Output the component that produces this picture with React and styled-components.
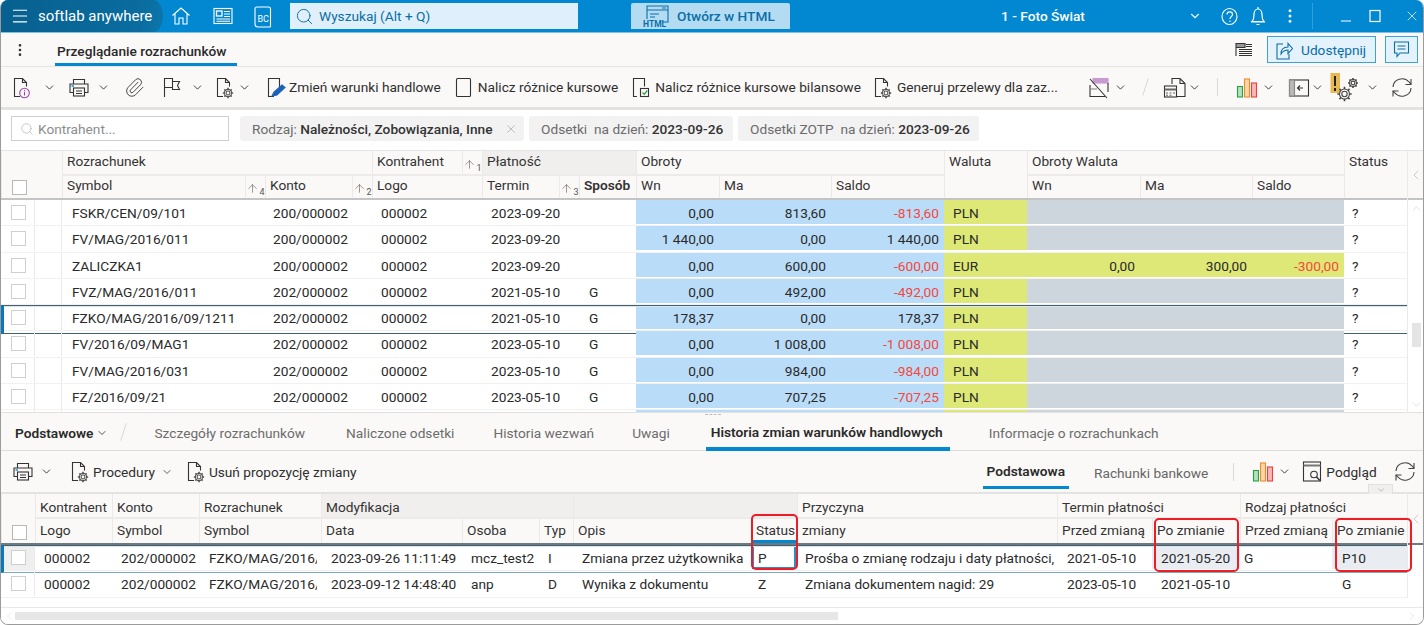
import React from 'react';
import styled, { createGlobalStyle } from 'styled-components';
import { ChevronDown, ChevronLeft, ChevronRight, ChevronUp, Search, Paperclip, X, Menu, EllipsisVertical, ArrowUp } from 'lucide-react';

const GlobalStyle = createGlobalStyle`
    html, body {
        margin: 0;
        padding: 0;
        background: #fff;
        font-family: Roboto, "Liberation Sans", sans-serif;
        font-size: 13.7px;
        color: #2a2a2a;
    }
    * { box-sizing: border-box; }
`;

const BLUE = '#0288d1';

const Window = styled.div`
    position: relative;
    width: 1424px;
    height: 625px;
    display: flex;
    flex-direction: column;
    overflow: hidden;
    background: #faf9f7;
    border: 1px solid #9b9b9b;
    border-top: 0;
    border-radius: 8px;
`;

/* title bar */
const TitleBar = styled.div`
    height: 33px;
    flex: none;
    display: flex;
    align-items: center;
    background: ${BLUE};
    color: #fff;
    border-bottom: 1px solid #7cc0e6;
`;
const Brand = styled.div`
    width: 162px;
    height: 100%;
    flex: none;
    display: flex;
    align-items: center;
    gap: 8px;
    padding-left: 9px;
    font-size: 15px;
    background: linear-gradient(100deg, #07608f 0%, #0a6c9f 85%, #0b77ad 100%);
    border-radius: 0 20px 20px 0 / 0 34px 34px 0;
`;
const TitleIcon = styled.span`
    display: flex;
    margin-left: ${p => p.$ml || 0}px;
    color: #e8f5fc;
`;
const SearchBox = styled.div`
    width: 288px;
    height: 26px;
    flex: none;
    margin-left: 17px;
    display: flex;
    align-items: center;
    gap: 5px;
    padding-left: 5px;
    background: #dff0fa;
    color: #0b6ea6;
`;
const HtmlButton = styled.div`
    width: 159px;
    height: 26px;
    flex: none;
    margin-left: 53px;
    display: flex;
    align-items: center;
    gap: 6px;
    padding-left: 12px;
    background: #b3dcf3;
    border-radius: 2px 2px 0 0;
    color: #0a6ea8;
    font-weight: 500;
`;
const CompanyName = styled.div`
    width: 300px;
    margin-left: 103px;
    text-align: center;
    font-weight: 500;
`;
const TitleDivider = styled.span`
    width: 1px;
    height: 26px;
    margin-left: 13px;
    background: #2fa0dd;
`;

/* tab line */
const TabBar = styled.div`
    height: 34px;
    flex: none;
    display: flex;
    align-items: center;
    padding: 0 5px 0 11px;
    border-bottom: 1px solid #e6e5e3;
`;
const MainTab = styled.div`
    height: 33px;
    width: 182px;
    margin-left: 27px;
    padding: 10px 0 0 2px;
    font-weight: 500;
    border-bottom: 3px solid ${BLUE};
    white-space: nowrap;
`;
const ShareButton = styled.div`
    width: 109px;
    height: 27px;
    margin-left: 13px;
    display: flex;
    align-items: center;
    gap: 8px;
    padding-left: 8px;
    background: #e3f2fb;
    border: 1px solid #3ba3dc;
    color: #0a6ea8;
`;
const ChatButton = styled(ShareButton)`
    width: 33px;
    margin-left: 9px;
    justify-content: center;
    padding: 0;
`;
const Grow = styled.div`
    flex: 1;
`;

/* toolbars */
const Toolbar = styled.div`
    height: ${p => p.$h || 43}px;
    flex: none;
    display: flex;
    align-items: center;
    padding-left: 11px;
    border-bottom: ${p => p.$line || '3px solid #e2e2e0'};
    white-space: nowrap;
`;
const Tool = styled.div`
    display: flex;
    align-items: center;
    gap: ${p => p.$gap ?? 4}px;
    margin-left: ${p => p.$ml || 0}px;
    color: #2e2e2e;
`;
const Slash = styled.span`
    width: 1px;
    height: 18px;
    margin-left: ${p => p.$ml || 0}px;
    background: #d8d8d6;
    transform: rotate(${p => p.$tilt ? 18 : 0}deg);
`;

/* filters */
const FilterBar = styled.div`
    height: 40px;
    flex: none;
    display: flex;
    align-items: center;
    gap: 5px;
    padding: 0 0 3px 10px;
    background: #fff;
`;
const FilterInput = styled.div`
    width: 218px;
    height: 25px;
    margin-right: 6px;
    display: flex;
    align-items: center;
    gap: 4px;
    padding-left: 8px;
    border: 1px solid #cfcfcf;
    color: #8d8d8d;
`;
const Chip = styled.div`
    height: 25px;
    width: ${p => p.$w}px;
    display: flex;
    align-items: center;
    padding-left: 12px;
    background: #f2f2f2;
    border-radius: 3px;
    color: #6b6b6b;
    white-space: pre;
    b { font-weight: 500; color: #333; }
`;

/* grids */
const TableArea = styled.div`
    display: flex;
    flex: none;
    background: #fff;
`;
const TableMain = styled.div`
    width: 1406px;
    flex: none;
`;
const HeadGrid = styled.div`
    --pad1: ${p => p.$pad1}px;
    --pad2: ${p => p.$pad2}px;
    display: grid;
    grid-template-columns: ${p => p.$cols};
    grid-template-rows: ${p => p.$rowsH};
    border-top: 1px solid #e4e4e2;
    border-bottom: 2px solid ${p => p.$line || '#c4c4c4'};
    background: #faf9f7;
    color: #333;
`;
const Head = styled.div`
    position: relative;
    grid-column: ${p => p.$col} / span ${p => p.$span || 1};
    grid-row: ${p => p.$row || 1} / span ${p => p.$rows || 1};
    display: flex;
    align-items: flex-start;
    justify-content: space-between;
    padding: var(--pad${p => p.$row || 1}) 0 0 4px;
    line-height: 16px;
    white-space: nowrap;
    overflow: hidden;
    background: ${p => p.$dark ? '#f0efed' : 'transparent'};
    border-left: 1px solid #ebeae8;
    border-bottom: ${p => (p.$row || 1) === 1 && p.$rows !== 2 ? '2px solid #ecebe9' : '0'};
    font-weight: ${p => p.$bold ? 600 : 400};
    ${p => p.$accent && `box-shadow: inset 0 -3px 0 ${BLUE};`}
`;
const Sort = styled.span`
    width: 20px;
    flex: none;
    align-self: stretch;
    margin-top: calc(var(--pad1) * -1);
    display: flex;
    align-items: center;
    justify-content: center;
    border-left: 1px solid #ecebe9;
    color: #555;
    font-size: 9px;
    padding-top: 3px;
    span { align-self: flex-end; line-height: 11px; }
`;
const RowsClip = styled.div`
    height: ${p => p.$h}px;
    overflow: hidden;
`;
const Row = styled.div`
    position: relative;
    display: grid;
    grid-template-columns: ${p => p.$cols};
    height: 26.25px;
    border-bottom: 1px solid #f1f1f1;
    ${p => p.$selected && `
        &::after {
            content: '';
            position: absolute;
            left: 0;
            right: 0;
            top: 0;
            height: ${p.$soft ? 26 : 27}px;
            border-top: 1px solid #47606e;
            border-bottom: 1px solid ${p.$soft ? '#7ea7c0' : '#47606e'};
            border-left: 3px solid #0a78b8;
            box-shadow: inset 0 1px 0 #d4e6f0;
            pointer-events: none;
        }
    `}
`;
const tones = { blue: '#b9dcf9', lime: '#dee876', grey: '#cdd6dd', soft: '#e9edf2', mute: '#efefef', none: 'transparent' };
const Cell = styled.div`
    height: 24px;
    margin-right: ${p => p.$clip || 0}px;
    display: flex;
    align-items: center;
    justify-content: ${p => p.$right ? 'flex-end' : 'flex-start'};
    padding: ${p => p.$right ? '2px 5px 0 0' : `2px 0 0 ${p.$pad ?? 9}px`};
    white-space: nowrap;
    overflow: hidden;
    background: ${p => tones[p.$tone || 'none']};
    color: ${p => p.$neg ? '#f4483c' : '#2a2a2a'};
    ${p => p.$focus && `
        border: 2px solid #2a8fc8;
        margin: 0 1px;
        padding: 1px 0 0 4px;
    `}
`;
const BoxCell = styled(Cell)`
    padding: 0 0 0 10px;
    border-right: 1px solid #ebeae8;
    height: 25px;
`;
const SpacerCell = styled.div`
    height: 25px;
    border-right: 1px solid #ebeae8;
`;
const Check = styled.span`
    width: 15px;
    height: 15px;
    flex: none;
    background: #fff;
    border: 1px solid #cfcfcf;
`;
const HeadCheck = styled(Check)`
    position: absolute;
    left: 10px;
    bottom: 3px;
    border-color: #b8b8b8;
`;

/* scroll side */
const SideBar = styled.div`
    flex: 1;
    display: flex;
    flex-direction: column;
    align-items: center;
    background: #fff;
    border-left: 1px solid #ebeae8;
    color: #b4b4b4;
`;
const SideHead = styled.div`
    width: 100%;
    height: ${p => p.$h}px;
    flex: none;
    display: flex;
    align-items: center;
    justify-content: center;
    background: #faf9f7;
    border-top: 1px solid #e4e4e2;
    border-bottom: 2px solid ${p => p.$line || '#c4c4c4'};
`;
const SideTrack = styled.div`
    flex: 1;
    width: 100%;
    display: flex;
    flex-direction: column;
    align-items: center;
    padding-top: 2px;
    color: #c8c8c8;
`;
const Thumb = styled.div`
    width: 9px;
    height: 24px;
    margin-top: 108px;
    margin-bottom: 51px;
    background: #e4e4e4;
`;

/* lower tabs */
const DetailTabs = styled.div`
    position: relative;
    height: 39px;
    flex: none;
    display: flex;
    align-items: center;
    padding-left: 14px;
    border-top: 1px solid #e2e2e0;
    border-bottom: 1px solid #dededc;
    white-space: nowrap;
    color: #6c6c6c;
`;
const DetailTab = styled.div`
    height: 38px;
    margin-left: ${p => p.$ml}px;
    padding: ${p => p.$active ? '5px 7px 0 5px' : '3px 0 0'};
    display: flex;
    align-items: center;
    gap: 3px;
    color: ${p => p.$active || p.$strong ? '#2a2a2a' : '#6c6c6c'};
    font-weight: ${p => p.$active || p.$strong ? 600 : 400};
    border-bottom: ${p => p.$active ? `4px solid ${BLUE}` : '0'};
`;
const Splitter = styled.span`
    position: absolute;
    left: 704px;
    top: 1px;
    width: 16px;
    border-top: 1px dashed #bdbdbd;
`;
const ViewTab = styled.div`
    align-self: flex-start;
    height: 38px;
    margin-left: ${p => p.$ml}px;
    padding: ${p => p.$active ? '5px 4px 0' : '5px 0 0'};
    display: flex;
    align-items: center;
    color: ${p => p.$active ? '#2a2a2a' : '#666'};
    font-weight: ${p => p.$active ? 600 : 400};
    border-bottom: ${p => p.$active ? `3px solid ${BLUE}` : '0'};
`;
const ExpandTab = styled.span`
    position: absolute;
    left: 1367px;
    top: 484px;
    width: 25px;
    height: 10px;
    display: flex;
    justify-content: center;
    align-items: center;
    background: #f0efed;
    border: 1px solid #e0e0de;
    border-bottom: 0;
    color: #888;
`;
const RedBox = styled.span`
    position: absolute;
    left: ${p => p.$x}px;
    top: ${p => p.$y}px;
    width: ${p => p.$w}px;
    height: ${p => p.$h}px;
    border: 2px solid #ee1c25;
    border-radius: 5px;
    pointer-events: none;
`;

/* bottom scrollbar */
const BottomArea = styled.div`
    flex: 1;
    background: #fff;
    display: flex;
    flex-direction: column;
    justify-content: flex-end;
`;
const HScroll = styled.div`
    height: 17px;
    display: flex;
    align-items: center;
    padding: 0 5px 0 2px;
    border-top: 1px solid #e8e8e8;
    color: #cfcfcf;
`;
const HThumb = styled.div`
    width: 823px;
    height: 8px;
    flex: none;
    background: #e6e6e6;
`;

/* drawings */
const Svg = ({ w = 22, h = 22, vb, children, sw = 1.1, color = '#333' }) => (
    <svg width={w} height={h} viewBox={vb || `0 0 ${w} ${h}`} fill="none" stroke={color} strokeWidth={sw} style={{ flex: 'none' }}>
        {children}
    </svg>
);
const Gear = ({ cx, cy, r, color = '#555' }) => (
    <g stroke={color}>
        <circle cx={cx} cy={cy} r={r * 0.42} />
        <circle cx={cx} cy={cy} r={r * 0.78} />
        {[0, 45, 90, 135, 180, 225, 270, 315].map(a => {
            const c = Math.cos(a * Math.PI / 180);
            const s = Math.sin(a * Math.PI / 180);
            return (
                <path key={a} strokeWidth="1.6" d={`M${cx + c * r * 0.78} ${cy + s * r * 0.78}L${cx + c * r * 1.12} ${cy + s * r * 1.12}`} />
            );
        })}
    </g>
);
const Chev = ({ ml = 0 }) => (
    <ChevronDown size={13} strokeWidth={1.7} color="#333" style={{ marginLeft: ml, flex: 'none' }} />
);
const DocBase = () => <path d="M8 20.5H2.5V2.5h8l4 4v4M10.5 2.5v4h4" />;
const DocInfo = () => (
    <Svg w={19} h={23}>
        <DocBase />
        <circle cx="12.5" cy="17" r="4.8" stroke="#a044a8" />
        <path d="M12.5 15.8v3.6M12.5 14v.9" stroke="#a044a8" />
    </Svg>
);
const DocGear = () => (
    <Svg w={19} h={23}>
        <DocBase />
        <Gear cx={13} cy={17} r={4.6} />
    </Svg>
);
const DocPen = () => (
    <Svg w={20} h={23}>
        <path d="M8 20.5H2.5V2.5h11v9" />
        <path d="M6 20l2-4 8-7 3 2.6-8 7.4z" fill="#1c63b8" stroke="#1c63b8" />
    </Svg>
);
const DocBlank = () => (
    <Svg w={17} h={23}>
        <rect x="1.5" y="2.5" width="14" height="18" rx="1" />
    </Svg>
);
const DocCheck = () => (
    <Svg w={20} h={23}>
        <path d="M6 20.5H2.5V2.5h11v8" />
        <rect x="9.5" y="12.5" width="8" height="8" />
        <path d="M11.5 16.5l1.8 1.8 3-3.8" stroke="#2f9e44" strokeWidth="1.3" />
    </Svg>
);
const PrinterIcon = () => (
    <Svg w={22} h={23}>
        <path d="M5.5 8V3.5h11V8M5.5 16.5H2V8h18v8.5h-3.5" />
        <rect x="5.5" y="12" width="11" height="8" />
        <path d="M8 15h6M8 17.5h6" />
        <path d="M3.5 10H6" stroke={BLUE} strokeWidth="1.4" />
    </Svg>
);
const FlagIcon = () => (
    <Svg w={18} h={23}>
        <path d="M1.5 21V2.5h8v3h7l-2 4 2 4h-7v-2h-8M9.5 2.5v9" />
    </Svg>
);
const NoteSlash = () => (
    <Svg w={22} h={23}>
        <rect x="5" y="2.5" width="15" height="4.5" fill="#c79bd0" stroke="#c79bd0" />
        <path d="M2 9v11.5h15M20 7v9M2 3l17 19" />
        <path d="M2 13h7" stroke="#888" />
    </Svg>
);
const DocTable = () => (
    <Svg w={25} h={23}>
        <path d="M9 8V2.5h8l5 5v13h-9M17 2.5v5h5" />
        <rect x="1.5" y="10" width="12" height="11" />
        <path d="M1.5 13.5h12" strokeWidth="2" stroke="#666" />
        <path d="M3 17h2M6.5 17h2M10 17h2M3 19.3h2M6.5 19.3h2" stroke="#666" />
    </Svg>
);
const BarsIcon = () => (
    <Svg w={23} h={23}>
        <rect x="1.5" y="10.5" width="5" height="10.5" fill="#b5dfbd" stroke="#25a244" />
        <rect x="8.5" y="3" width="5" height="18" fill="#fad7a8" stroke="#ef8a2c" />
        <rect x="15.5" y="7" width="5" height="14" fill="#f7b5b5" stroke="#e8423f" />
    </Svg>
);
const PanelIcon = () => (
    <Svg w={22} h={23}>
        <rect x="1.5" y="4" width="19" height="16" />
        <rect x="1.5" y="4" width="5" height="16" fill="#b9b9b9" stroke="#888" />
        <path d="M15 12h-5M12 9.5L9.5 12l2.500 2.500" />
    </Svg>
);
const WarnGears = () => (
    <Svg w={29} h={29}>
        <rect x="0.5" y="0" width="9.5" height="20" fill="#e9b84f" stroke="none" />
        <path d="M5 3v10M5 15v3" stroke="#222" strokeWidth="2" />
        <Gear cx={14.5} cy={21} r={6.4} color="#444" />
        <Gear cx={23} cy={10} r={4.4} color="#444" />
    </Svg>
);
const RefreshIcon = () => (
    <Svg w={22} h={23} color="#444">
        <path d="M2 11a9 8.5 0 0 1 16-5l2 2M20 12a9 8.5 0 0 1-16 5l-2-2" />
        <path d="M20 3v5.5h-5.5M2 20.5V15h5.5" />
    </Svg>
);
const ListIcon = () => (
    <Svg w={20} h={20}>
        <path d="M2 3.5h9v4H2zM2 3v13" fill="#999" />
        <path d="M5 9.5h13M5 11.5h13M5 13.5h13M5 15.5h13M12 4.5h6M12 6.5h6" />
    </Svg>
);
const PreviewIcon = () => (
    <Svg w={20} h={25}>
        <rect x="1.5" y="3" width="17" height="19" />
        <path d="M1.5 6.5h17" strokeWidth="2" stroke="#777" />
        <circle cx="12" cy="15.5" r="3.3" />
        <path d="M14.5 18l3.5 3.5" strokeWidth="1.5" />
    </Svg>
);
const HomeIcon = () => (
    <Svg w={20} h={20} color="#fff">
        <path d="M1.5 9.5L10 2l8.5 7.5M4 8v10h4v-6h4v6h4V8" />
    </Svg>
);
const NewsIcon = () => (
    <Svg w={20} h={18} color="#fff">
        <rect x="1" y="1.5" width="18" height="15" />
        <rect x="3.5" y="4" width="5.5" height="5" strokeWidth="1.3" />
        <path d="M11 4.5h6M11 7h6M11 9.5h6M3.5 12H17M3.5 14.3H17" />
    </Svg>
);
const BcIcon = () => (
    <Svg w={21} h={23} color="#fff">
        <path d="M5 2h11.5a2 2 0 0 1 2 2v18M5 2a2 2 0 0 0-2 2v15a3 3 0 0 0 3 3h12.5" />
        <text x="5.5" y="17" fontSize="9" fontFamily="Roboto" fill="#fff" stroke="none">BC</text>
    </Svg>
);
const HtmlIcon = () => (
    <Svg w={28} h={26} color="#0a6ea8">
        <path d="M4 16V3h21v16h-6" />
        <path d="M4 7h21M7 11h9M7 14h5M19 5h4" />
        <text x="0" y="24" fontSize="8.5" fontWeight="700" fontFamily="Roboto" fill="#0a6ea8" stroke="none">HTML</text>
    </Svg>
);
const HelpIcon = () => (
    <Svg w={17} h={19} color="#fff">
        <ellipse cx="8.5" cy="9.5" rx="7.5" ry="8" />
        <path d="M6 7.5c0-3.5 5.5-3.5 5.500 0 0 2-2.500 2-2.500 4.500M9 13.500V15" />
    </Svg>
);
const BellIcon = () => (
    <Svg w={16} h={22} color="#fff" sw={1.2}>
        <path d="M2 16.5c1.500-1.500 2-3 2-6.500 0-3 1.500-6 4-6s4 3 4 6c0 3.500.500 5 2 6.500zM1 17h14M8 2v2M6.500 19.500h3" />
    </Svg>
);
const MinIcon = () => (
    <Svg w={12} h={14} color="#fff" sw={1.2}><path d="M1 12h10" /></Svg>
);
const MaxIcon = () => (
    <Svg w={12} h={14} color="#fff" sw={1.2}><rect x="1" y="1.5" width="10" height="11" /></Svg>
);
const ShareIcon = () => (
    <Svg w={17} h={20} color="#0a6ea8">
        <path d="M7 4H1v15h12v-5" />
        <path d="M5 14c0-5 3-7 7-7V3.5l4.5 5-4.5 5V10c-3 0-5 1-7 4z" />
    </Svg>
);
const ChatIcon = () => (
    <Svg w={17} h={19} color="#0a6ea8">
        <path d="M1.5 2h14v11H7l-3 3.500V13H1.500z" />
        <path d="M4.5 6h8M4.5 9h8" />
    </Svg>
);

const SortMark = ({ n }) => (
    <Sort>
        <ArrowUp size={13} strokeWidth={1.1} />
        <span>{n}</span>
    </Sort>
);

/* data */
const upperCols = '34px 27px 203px 107px 110px 97px 57px 83px 112px 113px 83px 113px 112px 92px 63px';
const lowerCols = '34px 77px 87px 122px 141px 77px 34px 178px 46px 260px 95px 88px 92px 75px';

const documents = [
    ['FSKR/CEN/09/101', '200/000002', '2023-09-20', '', '0,00', '813,60', '-813,60', 'PLN'],
    ['FV/MAG/2016/011', '200/000002', '2023-09-20', '', '1 440,00', '0,00', '1 440,00', 'PLN'],
    ['ZALICZKA1', '200/000002', '2023-09-20', '', '0,00', '600,00', '-600,00', 'EUR', ['0,00', '300,00', '-300,00']],
    ['FVZ/MAG/2016/011', '202/000002', '2021-05-10', 'G', '0,00', '492,00', '-492,00', 'PLN'],
    ['FZKO/MAG/2016/09/1211', '202/000002', '2021-05-10', 'G', '178,37', '0,00', '178,37', 'PLN'],
    ['FV/2016/09/MAG1', '202/000002', '2023-05-10', 'G', '0,00', '1 008,00', '-1 008,00', 'PLN'],
    ['FV/MAG/2016/031', '202/000002', '2023-05-10', 'G', '0,00', '984,00', '-984,00', 'PLN'],
    ['FZ/2016/09/21', '202/000002', '2023-05-10', 'G', '0,00', '707,25', '-707,25', 'PLN'],
    ['', '', '', '', '', '', '', ''],
];

const changes = [
    {
        data: '2023-09-26 11:11:49', osoba: 'mcz_test2', typ: 'I', opis: 'Zmiana przez użytkownika', status: 'P',
        why: 'Prośba o zmianę rodzaju i daty płatności,', before: '2021-05-10', after: '2021-05-20', kindBefore: 'G', kindAfter: 'P10', selected: true,
    },
    {
        data: '2023-09-12 14:48:40', osoba: 'anp', typ: 'D', opis: 'Wynika z dokumentu', status: 'Z',
        why: 'Zmiana dokumentem nagid: 29', before: '2023-05-10', after: '2021-05-10', kindBefore: '', kindAfter: 'G',
    },
];

const isNeg = v => v.startsWith('-');

const UpperRow = ({ doc, selected }) => {
    const [symbol, konto, termin, sposob, wn, ma, saldo, waluta, foreign] = doc;
    const tone = foreign ? 'lime' : 'grey';
    return (
        <Row $cols={upperCols} $selected={selected}>
            <BoxCell><Check /></BoxCell>
            <SpacerCell />
            <Cell $pad={10}>{symbol}</Cell>
            <Cell $pad={8}>{konto}</Cell>
            <Cell>{symbol && '000002'}</Cell>
            <Cell>{termin}</Cell>
            <Cell $pad={10}>{sposob}</Cell>
            <Cell $tone="blue" $right>{wn}</Cell>
            <Cell $tone="blue" $right>{ma}</Cell>
            <Cell $tone="blue" $right $neg={isNeg(saldo)}>{saldo}</Cell>
            <Cell $tone="lime">{waluta}</Cell>
            {[0, 1, 2].map(i => (
                <Cell key={i} $tone={tone} $right $neg={foreign && isNeg(foreign[i])}>{foreign && foreign[i]}</Cell>
            ))}
            <Cell $pad={8}>{symbol && '?'}</Cell>
        </Row>
    );
};

const LowerRow = ({ row }) => (
    <Row $cols={lowerCols} $selected={row.selected} $soft>
        <BoxCell $tone={row.selected ? 'mute' : 'none'}><Check /></BoxCell>
        <Cell>000002</Cell>
        <Cell>202/000002</Cell>
        <Cell $pad={10} $clip={4}>FZKO/MAG/2016/09/1211</Cell>
        <Cell $pad={10}>{row.data}</Cell>
        <Cell>{row.osoba}</Cell>
        <Cell>{row.typ}</Cell>
        <Cell>{row.opis}</Cell>
        <Cell $pad={7} $focus={row.selected}>{row.status}</Cell>
        <Cell $pad={8}>{row.why}</Cell>
        <Cell $pad={10}>{row.before}</Cell>
        <Cell $tone={row.selected ? 'soft' : 'none'}>{row.after}</Cell>
        <Cell $pad={4}>{row.kindBefore}</Cell>
        <Cell $pad={10} $tone={row.selected ? 'soft' : 'none'}>{row.kindAfter}</Cell>
    </Row>
);

const App = () => (
    <Window>
        <GlobalStyle />
        <TitleBar>
            <Brand>
                <Menu size={20} strokeWidth={1.3} />
                <span>softlab anywhere</span>
            </Brand>
            <TitleIcon $ml={8}><HomeIcon /></TitleIcon>
            <TitleIcon $ml={22}><NewsIcon /></TitleIcon>
            <TitleIcon $ml={19}><BcIcon /></TitleIcon>
            <SearchBox>
                <Search size={19} strokeWidth={1.2} />
                Wyszukaj (Alt + Q)
            </SearchBox>
            <HtmlButton>
                <HtmlIcon />
                Otwórz w HTML
            </HtmlButton>
            <CompanyName>1 - Foto Świat</CompanyName>
            <TitleIcon $ml={-5}><ChevronDown size={14} strokeWidth={2} /></TitleIcon>
            <TitleIcon $ml={19}><HelpIcon /></TitleIcon>
            <TitleIcon $ml={12}><BellIcon /></TitleIcon>
            <TitleIcon $ml={15}><EllipsisVertical size={18} strokeWidth={2} /></TitleIcon>
            <TitleDivider />
            <TitleIcon $ml={27}><MinIcon /></TitleIcon>
            <TitleIcon $ml={17}><MaxIcon /></TitleIcon>
            <TitleIcon $ml={23}><X size={16} strokeWidth={1.2} /></TitleIcon>
        </TitleBar>

        <TabBar>
            <EllipsisVertical size={16} strokeWidth={2} color="#333" />
            <MainTab>Przeglądanie rozrachunków</MainTab>
            <Grow />
            <ListIcon />
            <ShareButton><ShareIcon />Udostępnij</ShareButton>
            <ChatButton><ChatIcon /></ChatButton>
        </TabBar>

        <Toolbar>
            <Tool $gap={12}><DocInfo /><Chev /></Tool>
            <Tool $ml={12} $gap={7}><PrinterIcon /><Chev /></Tool>
            <Tool $ml={14}><Paperclip size={21} strokeWidth={1.1} color="#444" /></Tool>
            <Tool $ml={18} $gap={10}><FlagIcon /><Chev /></Tool>
            <Tool $ml={11} $gap={4}><DocGear /><Chev /></Tool>
            <Tool $ml={15} $gap={3}><DocPen />Zmień warunki handlowe</Tool>
            <Tool $ml={14} $gap={6}><DocBlank />Nalicz różnice kursowe</Tool>
            <Tool $ml={13} $gap={4}><DocCheck />Nalicz różnice kursowe bilansowe</Tool>
            <Tool $ml={12} $gap={5}><DocGear />Generuj przelewy dla zaz...</Tool>
            <Tool $ml={30} $gap={4}><NoteSlash /><Chev /></Tool>
            <Slash $ml={18} $tilt />
            <Tool $ml={17} $gap={0}><DocTable /><Chev /></Tool>
            <Slash $ml={16} />
            <Tool $ml={18} $gap={3}><BarsIcon /><Chev /></Tool>
            <Tool $ml={13} $gap={1}><PanelIcon /><Chev /></Tool>
            <Tool $ml={6} $gap={7}><WarnGears /><Chev /></Tool>
            <Tool $ml={12}><RefreshIcon /></Tool>
        </Toolbar>

        <FilterBar>
            <FilterInput>
                <Search size={14} strokeWidth={1.1} color="#aaa" />
                Kontrahent...
            </FilterInput>
            <Chip $w={284}>Rodzaj: <b>Należności, Zobowiązania, Inne</b><X size={14} strokeWidth={1} color="#999" style={{ marginLeft: 11 }} /></Chip>
            <Chip $w={204}>Odsetki  na dzień: <b>2023-09-26</b></Chip>
            <Chip $w={241}>Odsetki ZOTP  na dzień: <b>2023-09-26</b></Chip>
        </FilterBar>

        <TableArea>
            <TableMain>
                <HeadGrid $cols={upperCols} $rowsH="25px 22px" $pad1={2} $pad2={1}>
                    <Head $col={1} $rows={2} $span={2}><HeadCheck /></Head>
                    <Head $col={3} $span={2}>Rozrachunek</Head>
                    <Head $col={5}>Kontrahent<SortMark n="1" /></Head>
                    <Head $col={6} $span={2} $dark>Płatność</Head>
                    <Head $col={8} $span={3}>Obroty</Head>
                    <Head $col={11} $rows={2}>Waluta</Head>
                    <Head $col={12} $span={3}>Obroty Waluta</Head>
                    <Head $col={15} $rows={2}>Status</Head>
                    <Head $col={3} $row={2}>Symbol<SortMark n="4" /></Head>
                    <Head $col={4} $row={2}>Konto<SortMark n="2" /></Head>
                    <Head $col={5} $row={2}>Logo</Head>
                    <Head $col={6} $row={2}>Termin<SortMark n="3" /></Head>
                    <Head $col={7} $row={2} $bold>Sposób</Head>
                    <Head $col={8} $row={2}>Wn</Head>
                    <Head $col={9} $row={2}>Ma</Head>
                    <Head $col={10} $row={2}>Saldo</Head>
                    <Head $col={12} $row={2}>Wn</Head>
                    <Head $col={13} $row={2}>Ma</Head>
                    <Head $col={14} $row={2}>Saldo</Head>
                </HeadGrid>
                <RowsClip $h={212}>
                    {documents.map((doc, i) => (
                        <UpperRow key={i} doc={doc} selected={i === 4} />
                    ))}
                </RowsClip>
            </TableMain>
            <SideBar>
                <SideHead $h={50}><ChevronLeft size={16} strokeWidth={1} /></SideHead>
                <SideTrack>
                    <ChevronUp size={13} strokeWidth={1} />
                    <Thumb />
                    <ChevronDown size={13} strokeWidth={1} />
                </SideTrack>
            </SideBar>
        </TableArea>

        <DetailTabs>
            <Splitter />
            <DetailTab $ml={0} $strong>Podstawowe<ChevronDown size={12} strokeWidth={1.6} /></DetailTab>
            <Slash $ml={15} $tilt />
            <DetailTab $ml={30}>Szczegóły rozrachunków</DetailTab>
            <DetailTab $ml={41}>Naliczone odsetki</DetailTab>
            <DetailTab $ml={39}>Historia wezwań</DetailTab>
            <DetailTab $ml={38}>Uwagi</DetailTab>
            <DetailTab $ml={36} $active>Historia zmian warunków handlowych</DetailTab>
            <DetailTab $ml={39}>Informacje o rozrachunkach</DetailTab>
        </DetailTabs>

        <Toolbar $h={42} $line="1px solid #e2e2e0">
            <Tool $gap={6}><PrinterIcon /><Chev /></Tool>
            <Tool $ml={17} $gap={4}><DocGear />Procedury<ChevronDown size={12} strokeWidth={1.5} style={{ marginLeft: 2 }} /></Tool>
            <Tool $ml={13} $gap={4}><DocGear />Usuń propozycję zmiany</Tool>
            <ViewTab $ml={626} $active>Podstawowa</ViewTab>
            <ViewTab $ml={25}>Rachunki bankowe</ViewTab>
            <Slash $ml={25} />
            <Tool $ml={18} $gap={3}><BarsIcon /><Chev /></Tool>
            <Tool $ml={11} $gap={4}><PreviewIcon />Podgląd</Tool>
            <Tool $ml={17}><RefreshIcon /></Tool>
        </Toolbar>

        <TableArea>
            <TableMain>
                <HeadGrid $cols={lowerCols} $rowsH="25px 24px" $pad1={5} $pad2={3} $line="#6f7a80">
                    <Head $col={1} $rows={2}><HeadCheck /></Head>
                    <Head $col={2}>Kontrahent</Head>
                    <Head $col={3}>Konto</Head>
                    <Head $col={4}>Rozrachunek</Head>
                    <Head $col={5} $span={3} $dark>Modyfikacja</Head>
                    <Head $col={8} $span={2} $dark />
                    <Head $col={10}>Przyczyna</Head>
                    <Head $col={11} $span={2}>Termin płatności</Head>
                    <Head $col={13} $span={2}>Rodzaj płatności</Head>
                    <Head $col={2} $row={2}>Logo</Head>
                    <Head $col={3} $row={2}>Symbol</Head>
                    <Head $col={4} $row={2}>Symbol</Head>
                    <Head $col={5} $row={2}>Data</Head>
                    <Head $col={6} $row={2}>Osoba</Head>
                    <Head $col={7} $row={2}>Typ</Head>
                    <Head $col={8} $row={2}>Opis</Head>
                    <Head $col={9} $row={2} $accent>Status</Head>
                    <Head $col={10} $row={2}>zmiany</Head>
                    <Head $col={11} $row={2}>Przed zmianą</Head>
                    <Head $col={12} $row={2}>Po zmianie</Head>
                    <Head $col={13} $row={2}>Przed zmianą</Head>
                    <Head $col={14} $row={2}>Po zmianie</Head>
                </HeadGrid>
                {changes.map(row => <LowerRow key={row.data} row={row} />)}
            </TableMain>
            <SideBar>
                <SideHead $h={52} $line="#6f7a80"><ChevronLeft size={16} strokeWidth={1} /></SideHead>
            </SideBar>
        </TableArea>

        <BottomArea>
            <HScroll>
                <ChevronLeft size={12} strokeWidth={1} />
                <HThumb />
                <Grow />
                <ChevronRight size={12} strokeWidth={1} />
            </HScroll>
        </BottomArea>

        <ExpandTab><ChevronDown size={10} strokeWidth={1.2} /></ExpandTab>
        <RedBox $x={750} $y={514} $w={47} $h={56} />
        <RedBox $x={1153} $y={518} $w={85} $h={54} />
        <RedBox $x={1334} $y={518} $w={77} $h={54} />
    </Window>
);

export default App;
